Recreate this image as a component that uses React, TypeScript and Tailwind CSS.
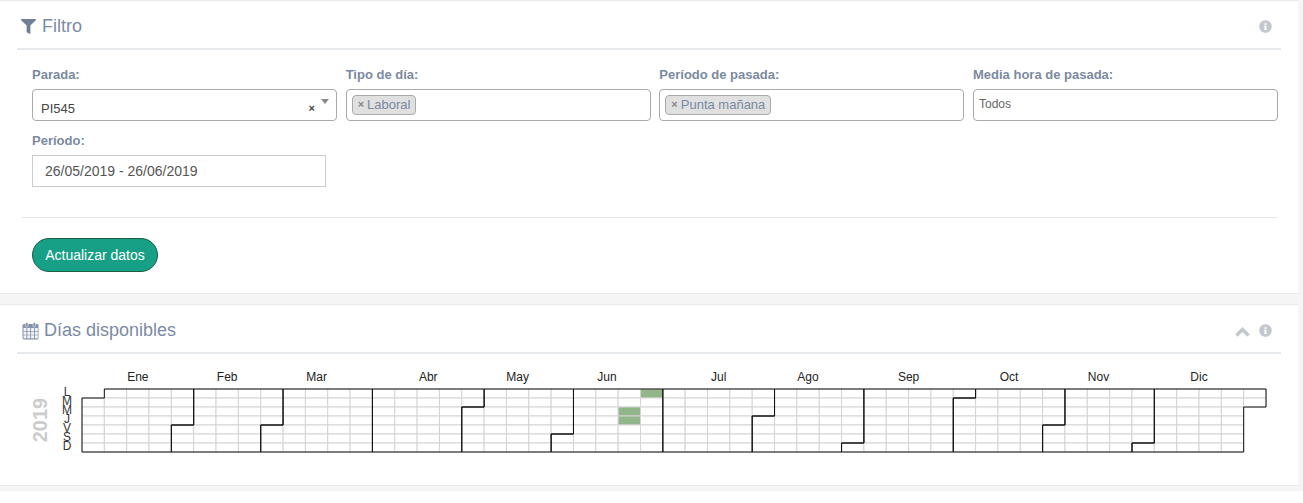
import { FaFilter, FaInfoCircle } from "react-icons/fa";

const CELL_W = 22.34;
const CELL_H = 9;
const LEFT = 82;
const TOP = 35;

const monthNames = ["Ene", "Feb", "Mar", "Abr", "May", "Jun", "Jul", "Ago", "Sep", "Oct", "Nov", "Dic"];
const monthDays = [31, 28, 31, 30, 31, 30, 31, 31, 30, 31, 30, 31];
const dayNames = ["L", "M", "M", "J", "V", "S", "D"];
const activeDays = [169, 170, 174];

// 1 Jan 2019 fue martes, por eso el +1
const weekOf = (i: number) => Math.floor((i + 1) / 7);
const rowOf = (i: number) => (i + 1) % 7;

function monthPath(first: number, last: number) {
  const w0 = weekOf(first);
  const d0 = rowOf(first);
  const w1 = weekOf(last);
  const d1 = rowOf(last);
  return (
    `M${LEFT + (w0 + 1) * CELL_W},${TOP + d0 * CELL_H}` +
    `H${LEFT + w0 * CELL_W}V${TOP + 7 * CELL_H}` +
    `H${LEFT + w1 * CELL_W}V${TOP + (d1 + 1) * CELL_H}` +
    `H${LEFT + (w1 + 1) * CELL_W}V${TOP}` +
    `H${LEFT + (w0 + 1) * CELL_W}Z`
  );
}

function YearChart() {
  const cells = Array.from({ length: 365 }, (_, i) => i);
  let start = 0;
  const months = monthNames.map((name, m) => {
    const first = start;
    const last = start + monthDays[m] - 1;
    start = last + 1;
    return { name, first, last };
  });

  return (
    <svg width="1298" height="128" className="block">
      <text
        transform="translate(47,66) rotate(-90)"
        textAnchor="middle"
        fontSize="20"
        fontWeight="700"
        fill="#cccccc"
      >
        2019
      </text>
      {dayNames.map((d, i) => (
        <text key={i} x="67" y={TOP + 7 + i * 9.05} textAnchor="middle" fontSize="12" fill="#333333">
          {d}
        </text>
      ))}
      {cells.map((i) => (
        <rect
          key={i}
          x={LEFT + weekOf(i) * CELL_W}
          y={TOP + rowOf(i) * CELL_H}
          width={CELL_W}
          height={CELL_H}
          fill={activeDays.includes(i) ? "#93b58a" : "#ffffff"}
          stroke="#d4d4d4"
        />
      ))}
      {months.map((m) => (
        <path key={m.name} d={monthPath(m.first, m.last)} fill="none" stroke="#111111" />
      ))}
      {months.map((m) => (
        <text
          key={m.name}
          x={LEFT + ((weekOf(m.first) + weekOf(m.last) + 1) / 2) * CELL_W}
          y="27"
          textAnchor="middle"
          fontSize="12"
          fill="#222222"
        >
          {m.name}
        </text>
      ))}
    </svg>
  );
}

function CalendarIcon() {
  return (
    <svg width="17" height="18" viewBox="0 0 17 18" className="shrink-0">
      <rect x="0.5" y="2" width="16" height="15.5" rx="1.5" fill="#8492ab" />
      <rect x="3.5" y="0.5" width="2.5" height="4.5" rx="1.2" fill="#8492ab" stroke="#ffffff" strokeWidth="0.5" />
      <rect x="11" y="0.5" width="2.5" height="4.5" rx="1.2" fill="#8492ab" stroke="#ffffff" strokeWidth="0.5" />
      <g fill="#f4f5f8">
        {[1.5, 5.3, 9.1, 12.9].map((x) =>
          [6, 9.7, 13.3].map((y) => <rect key={`${x}-${y}`} x={x} y={y} width="2.9" height="3" />)
        )}
      </g>
    </svg>
  );
}

function ChevronUpIcon() {
  return (
    <svg width="15" height="10" viewBox="0 0 15 10" className="shrink-0 mt-[2px]">
      <path d="M1.5 8.5L7.5 2.5L13.5 8.5" fill="none" stroke="#c3c8ce" strokeWidth="3.4" />
    </svg>
  );
}

function Tag({ text }: { text: string }) {
  return (
    <span className="flex items-center h-[20px] px-[5px] gap-[3px] bg-[#e0e0e0] border border-[#aaaaaa] rounded-[4px] text-[13px] text-[#7b8aa0]">
      <b className="text-[#888888] text-[11px]">×</b>
      {text}
    </span>
  );
}

function Field({ label, children }: { label: string; children: React.ReactNode }) {
  return (
    <div>
      <label className="block h-[24px] pt-[1px] text-[13px] leading-[18px] font-bold text-[#7b8aa0]">{label}</label>
      {children}
    </div>
  );
}

const boxClass = "flex items-center h-[32px] border border-[#aaaaaa] rounded-[4px] bg-white";

export default function App() {
  return (
    <div className="h-[491px] pr-[5px] bg-[#f5f5f5] text-[#555555] font-['Liberation_Sans',Arial,sans-serif]">
      <section className="h-[294px] bg-white border-t border-b border-[#e7eaec] px-[17px]">
        <div className="flex items-center justify-between h-[49px] pt-[4px] pl-[4px] pr-[9px] border-b-2 border-[#e7eaec] text-[#7b8aa5]">
          <div className="flex items-center gap-[6px] text-[18px]">
            <FaFilter className="text-[15px] text-[#6f7f95]" />
            Filtro
          </div>
          <FaInfoCircle className="text-[13px] text-[#c3c8ce]" />
        </div>

        <div className="pl-[15px] pr-[3px] pt-[15px] grid grid-cols-4 gap-x-[8.67px] gap-y-[10px]">
          <Field label="Parada:">
            <div className={`${boxClass} pl-[8px] pr-[7px] text-[13px] text-[#444444]`}>
              <span className="flex-1 pt-[7px]">PI545</span>
              <b className="text-[11px] pt-[6px] mr-[6px]">×</b>
              <span className="mb-[8px] w-0 h-0 border-x-[4px] border-x-transparent border-t-[5px] border-t-[#888888]" />
            </div>
          </Field>
          <Field label="Tipo de día:">
            <div className={`${boxClass} pl-[5px] pb-[1px]`}>
              <Tag text="Laboral" />
            </div>
          </Field>
          <Field label="Período de pasada:">
            <div className={`${boxClass} pl-[5px] pb-[1px]`}>
              <Tag text="Punta mañana" />
            </div>
          </Field>
          <Field label="Media hora de pasada:">
            <div className={`${boxClass} pl-[5px] pb-[3px] text-[12px] text-[#666666]`}>Todos</div>
          </Field>
          <Field label="Período:">
            <div className="flex items-center h-[32px] w-[294px] pl-[12px] border border-[#cccccc] text-[14px] text-[#555555]">
              26/05/2019 - 26/06/2019
            </div>
          </Field>
        </div>

        <hr className="mt-[30px] ml-[5px] mr-[4px] border-[#e7e7e7]" />

        <button className="mt-[20px] ml-[15px] h-[34px] w-[126px] rounded-full bg-[#17a085] border border-[#1c5f45] text-white text-[14px]">
          Actualizar datos
        </button>
      </section>

      <section className="mt-[10px] h-[182px] bg-white border-t border-b border-[#e7eaec]">
        <div className="mx-[17px] flex items-center justify-between h-[49px] pt-[4px] pl-[5px] pr-[9px] border-b-2 border-[#e7eaec] text-[#7b8aa5]">
          <div className="flex items-center gap-[5px] text-[18px]">
            <CalendarIcon />
            Días disponibles
          </div>
          <div className="flex items-center gap-[9px] text-[#c3c8ce]">
            <ChevronUpIcon />
            <FaInfoCircle className="text-[13px]" />
          </div>
        </div>
        <YearChart />
      </section>
    </div>
  );
}
